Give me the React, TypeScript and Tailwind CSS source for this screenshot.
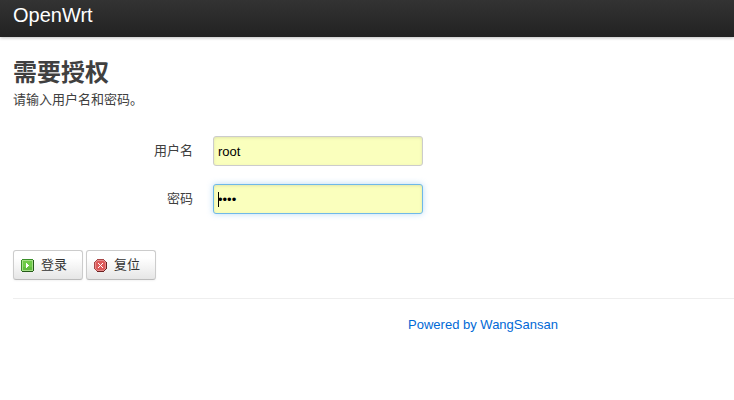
import React, { useState } from 'react';
import { cva } from 'class-variance-authority';

const field = cva(
  'h-[30px] w-[210px] rounded-[3px] border bg-[#faffbd] px-1 text-[13px] text-black outline-none',
  {
    variants: {
      active: {
        true: 'border-[#6fb8e8] shadow-[inset_0_1px_3px_rgba(0,0,0,0.1),0_0_6px_rgba(82,168,236,0.4)]',
        false: 'border-[#ccc] shadow-[inset_0_1px_3px_rgba(0,0,0,0.1)]',
      },
    },
  }
);

const buttonClass =
  'flex h-[30px] w-[70px] items-center gap-[7px] rounded-[3px] border border-[#ccc] border-b-[#bbb] bg-linear-to-b from-white from-25% to-[#e6e6e6] pl-[7px] text-[13px] text-[#333] shadow-[inset_0_1px_0_rgba(255,255,255,0.2),0_1px_2px_rgba(0,0,0,0.05)]';

function ApplyIcon() {
  return (
    <svg width="13" height="13" viewBox="0 0 13 13" shapeRendering="crispEdges" aria-hidden="true">
      <path d="M1 0h11v1h1v11h-1v1H1v-1H0V1h1z" fill="#3a8f2a" />
      <path d="M12 1h1v11h-1v1H1v-1h11z" fill="#245a18" />
      <path d="M1 1h11v11H1z" fill="#a5e088" />
      <path d="M2 2h9v9H2z" fill="#6ecb48" />
      <path d="M2 8h9v3H2z" fill="#62bd40" />
      <path d="M5 4h1v1h1v1h1v1H7v1H6v1H5z" fill="#fff" />
    </svg>
  );
}

function ResetIcon() {
  return (
    <svg width="13" height="13" viewBox="0 0 13 13" shapeRendering="crispEdges" aria-hidden="true">
      <path d="M3 0h7v1h1v1h1v1h1v7h-1v1h-1v1h-1v1H3v-1H2v-1H1v-1H0V3h1V2h1V1h1z" fill="#a84848" />
      <path d="M12 3h1v7h-1v1h-1v1h-1v1H3v-1h7v-1h1v-1h1z" fill="#6b2222" />
      <path d="M3 1h7v1h1v1h1v7h-1v1h-1v1H3v-1H2v-1H1V3h1V2h1z" fill="#e68a8a" />
      <path d="M3 2h7v1h1v7h-1v1H3v-1H2V3h1z" fill="#dd5a5a" />
      <path
        d="M4 4h1v1H4zM8 4h1v1H8zM5 5h1v1H5zM7 5h1v1H7zM6 6h1v1H6zM5 7h1v1H5zM7 7h1v1H7zM4 8h1v1H4zM8 8h1v1H8z"
        fill="#fff"
      />
    </svg>
  );
}

export default function App() {
  const [username, setUsername] = useState('root');
  const [password, setPassword] = useState('root');
  const [focused, setFocused] = useState('password');

  const handleReset = () => {
    setUsername('root');
    setPassword('');
  };

  return (
    <div className="overflow-hidden bg-white font-['Liberation_Sans','Noto_Sans_CJK_SC',sans-serif] text-[13px] leading-[18px] text-[#404040]">
      <header className="h-[37px] bg-linear-to-b from-[#333] to-[#222] px-[13px] pt-[3px] shadow-[0_1px_3px_rgba(0,0,0,0.25)]">
        <a href="#" className="text-[20px] leading-6 text-white">
          OpenWrt
        </a>
      </header>

      <main className="min-w-[953px] pl-[13px] pt-[18px]">
        <form onSubmit={(e) => e.preventDefault()}>
          <h2 className="text-[24px] font-bold leading-9">需要授权</h2>
          <p>请输入用户名和密码。</p>

          <div className="mt-[27px] flex flex-col gap-[18px]">
            <div className="flex items-center gap-5">
              <label htmlFor="username" className="w-[180px] text-right">
                用户名
              </label>
              <input
                id="username"
                type="text"
                className={field({ active: focused === 'username' })}
                value={username}
                onChange={(e) => setUsername(e.target.value)}
                onFocus={() => setFocused('username')}
              />
            </div>
            <div className="flex items-center gap-5">
              <label htmlFor="password" className="w-[180px] text-right">
                密码
              </label>
              <div className="relative flex">
                <input
                  id="password"
                  type="password"
                  autoFocus
                  className={field({ active: focused === 'password', className: 'caret-transparent' })}
                  value={password}
                  onChange={(e) => setPassword(e.target.value)}
                  onFocus={() => setFocused('password')}
                />
                {focused === 'password' && (
                  <span className="pointer-events-none absolute left-[5px] top-2 h-[15px] w-px bg-black" />
                )}
              </div>
            </div>
          </div>

          <div className="mt-9 flex gap-[3px]">
            <button type="submit" className={buttonClass}>
              <ApplyIcon />
              登录
            </button>
            <button type="button" onClick={handleReset} className={buttonClass}>
              <ResetIcon />
              复位
            </button>
          </div>
        </form>

        <footer className="mt-[18px] border-t border-[#eee] pt-[17px] text-center">
          <a href="#" className="text-[#0069d6]">
            Powered by WangSansan
          </a>
        </footer>
      </main>
    </div>
  );
}
